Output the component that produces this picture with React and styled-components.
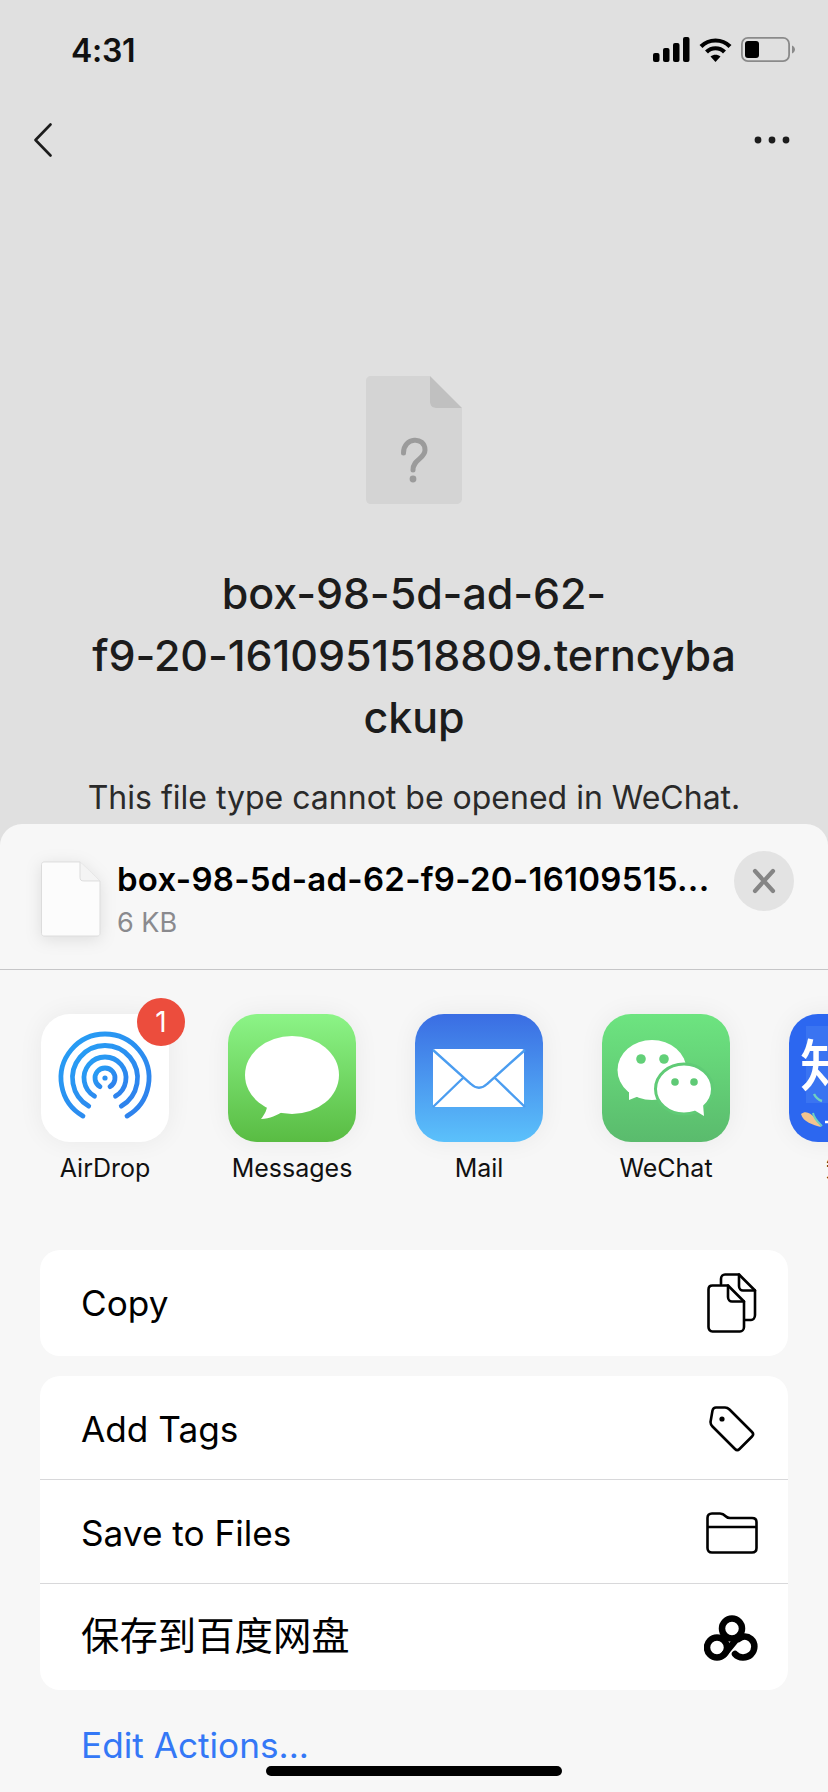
import React from "react";
import styled, { createGlobalStyle } from "styled-components";

const GlobalStyle = createGlobalStyle`
  html, body {
    margin: 0;
    padding: 0;
    background: #e0e0e0;
  }
  * {
    box-sizing: border-box;
  }
`;

const Page = styled.div`
  width: 828px;
  height: 1792px;
  position: relative;
  overflow: hidden;
  display: flex;
  flex-direction: column;
  background: #e0e0e0;
  color: #000;
  font-family: Inter, "Noto Sans CJK SC", sans-serif;
`;

const Preview = styled.div`
  height: 824px;
  flex: none;
  overflow: hidden;
  display: flex;
  flex-direction: column;
`;

const StatusBar = styled.div`
  height: 110px;
  padding: 32px 33px 0 71px;
  display: flex;
  justify-content: space-between;
  align-items: flex-start;
`;

const Clock = styled.div`
  font-size: 32px;
  line-height: 38px;
  font-weight: 600;
  letter-spacing: -0.3px;
  color: #111;
`;

const StatusIcons = styled.div`
  display: flex;
  gap: 9px;
  padding-top: 5px;
  align-items: flex-start;
`;

const NavBar = styled.div`
  height: 60px;
  padding: 0 38px 0 34px;
  display: flex;
  justify-content: space-between;
  align-items: center;
`;

const FileBlock = styled.div`
  padding-top: 206px;
  display: flex;
  flex-direction: column;
  align-items: center;
`;

const FileName = styled.div`
  margin-top: 58px;
  text-align: center;
  font-size: 43px;
  line-height: 62px;
  font-weight: 500;
  color: #1c1c1c;
  letter-spacing: -0.1px;
`;

const FileNameLine = styled.div`
  white-space: nowrap;
`;

const FileHint = styled.div`
  margin-top: 30px;
  font-size: 32px;
  line-height: 40px;
  color: #2a2a2a;
`;

const Sheet = styled.div`
  flex: 1;
  background: #f7f7f7;
  border-radius: 22px 22px 0 0;
  display: flex;
  flex-direction: column;
  overflow: hidden;
`;

const SheetHeader = styled.div`
  height: 146px;
  flex: none;
  padding: 0 34px 0 41px;
  display: flex;
  align-items: center;
  gap: 16px;
  border-bottom: 1px solid #c6c6c8;
`;

const HeaderText = styled.div`
  flex: 1;
  min-width: 0;
  display: flex;
  flex-direction: column;
  gap: 9px;
  margin-top: 6px;
`;

const HeaderTitle = styled.div`
  font-size: 33px;
  line-height: 38px;
  font-weight: 600;
  white-space: nowrap;
  letter-spacing: 0.26px;
`;

const HeaderSize = styled.div`
  font-size: 27px;
  line-height: 32px;
  color: #8a8a8e;
`;

const CloseButton = styled.div`
  width: 60px;
  height: 60px;
  flex: none;
  align-self: flex-start;
  margin-top: 27px;
  margin-left: 8px;
  border-radius: 50%;
  background: #e3e3e3;
  display: flex;
  align-items: center;
  justify-content: center;
`;

const AppRow = styled.div`
  height: 280px;
  flex: none;
  padding: 44px 0 0 41px;
  display: flex;
  gap: 59px;
  overflow: hidden;
`;

const AppItem = styled.div`
  width: 128px;
  flex: none;
  display: flex;
  flex-direction: column;
  align-items: center;
  gap: 10px;
  position: relative;
`;

const AppTile = styled.div`
  width: 128px;
  height: 128px;
  border-radius: 29px;
  overflow: hidden;
  background: ${({ $bg }) => $bg};
  box-shadow: 0 0 26px rgba(0, 0, 0, 0.06);
  display: flex;
  align-items: center;
  justify-content: center;
  position: relative;
`;

const AppLabel = styled.div`
  font-size: ${({ $cjk }) => ($cjk ? 27 : 25)}px;
  line-height: 32px;
  white-space: nowrap;
  color: #111;
`;

const Badge = styled.div`
  position: absolute;
  top: -16px;
  right: -16px;
  width: 48px;
  height: 48px;
  border-radius: 50%;
  background: #ec4d3d;
  color: #fff;
  font-size: 28px;
  line-height: 48px;
  text-align: center;
`;

const ZhihuPatch = styled.span`
  position: absolute;
  left: 17px;
  top: 12px;
  width: 90px;
  height: 77px;
  background: #3a74f1;
`;

const ZhihuGlyph = styled.span`
  position: absolute;
  left: 11px;
  top: 22px;
  color: #fff;
  font-size: 56px;
  line-height: 60px;
  font-weight: 500;
`;

const ActionCards = styled.div`
  padding: 0 40px;
  display: flex;
  flex-direction: column;
  gap: 20px;
`;

const Card = styled.div`
  background: #fff;
  border-radius: 20px;
  overflow: hidden;
`;

const ActionRow = styled.div`
  height: ${({ $h }) => $h || 104}px;
  padding: 0 26px 0 41px;
  display: flex;
  align-items: center;
  justify-content: space-between;
  font-size: ${({ $cjk }) => ($cjk ? 38.4 : 35.2)}px;
  color: #000;
  ${Card} + ${Card} & {
    padding-top: 2px;
  }
  & + & {
    border-top: 1px solid #d8d8da;
  }
`;

const RowLabel = styled.span`
  margin-bottom: ${({ $cjk }) => ($cjk ? 10 : 0)}px;
`;

const RowIcon = styled.span`
  width: 60px;
  display: flex;
  justify-content: center;
`;

const EditActions = styled.div`
  margin-top: 34px;
  padding-left: 81px;
  font-size: 35.2px;
  line-height: 42px;
  color: #3478f6;
`;

const HomeBar = styled.div`
  position: absolute;
  left: 266px;
  bottom: 16px;
  width: 296px;
  height: 10px;
  border-radius: 5px;
  background: #000;
`;

const Signal = () => (
  <svg width="37" height="25" viewBox="0 0 37 25">
    <rect x="0" y="16" width="6.5" height="9" rx="2" />
    <rect x="10" y="11" width="6.5" height="14" rx="2" />
    <rect x="20" y="6" width="6.5" height="19" rx="2" />
    <rect x="30" y="0" width="6.5" height="25" rx="2" />
  </svg>
);

const Wifi = () => (
  <svg width="33" height="25" viewBox="0 0 33 25" fill="none" stroke="#000" strokeWidth="4.2">
    <path d="M2 9.5C10 1.5 23 1.5 31 9.5" />
    <path d="M7.5 15C12.5 10 20.5 10 25.5 15" />
    <path d="M16.5 25L11.5 19.5C14.5 17 18.5 17 21.5 19.5Z" fill="#000" stroke="none" />
  </svg>
);

const Battery = () => (
  <svg width="54" height="25" viewBox="0 0 54 25">
    <rect x="0.9" y="0.9" width="47.2" height="23.2" rx="6" fill="none" stroke="#8a8a8a" strokeWidth="1.8" />
    <rect x="4" y="4" width="14" height="17" rx="3" fill="#000" />
    <path d="M51 8.5C53 9.5 54 11 54 12.5C54 14 53 15.5 51 16.5Z" fill="#8a8a8a" />
  </svg>
);

const Back = () => (
  <svg width="18" height="34" viewBox="0 0 18 34" fill="none" stroke="#1c1c1c" strokeWidth="2.6" strokeLinecap="round" strokeLinejoin="round">
    <path d="M16.5 1.5L1.5 17L16.5 32.5" />
  </svg>
);

const More = () => (
  <svg width="36" height="8" viewBox="0 0 36 8" fill="#1c1c1c">
    <circle cx="4" cy="4" r="3.4" />
    <circle cx="18" cy="4" r="3.4" />
    <circle cx="32" cy="4" r="3.4" />
  </svg>
);

const UnknownFile = () => (
  <svg width="96" height="128" viewBox="0 0 96 128">
    <path d="M5 0H64V26C64 29 66 32 70 32H96V123C96 126 93 128 91 128H5C2 128 0 126 0 123V5C0 2 2 0 5 0Z" fill="#d4d4d4" />
    <path d="M64 0L96 32H70C66 32 64 29 64 26Z" fill="#c0c0c0" />
    <path d="M37.5 77C37.5 61 59 60 59 74C59 83 47 83 47 94" fill="none" stroke="#9b9b9b" strokeWidth="5" strokeLinecap="round" />
    <circle cx="47" cy="103" r="3.4" fill="#9b9b9b" />
  </svg>
);

const SmallFile = () => (
  <svg width="60" height="76" viewBox="0 0 60 80" preserveAspectRatio="none" style={{ flex: "none", marginTop: 4, filter: "drop-shadow(0 3px 8px rgba(0,0,0,0.1))" }}>
    <path d="M3 1H39L59 21V76C59 78 58 79 56 79H3C1.5 79 0.5 78 0.5 76V4C0.5 2 1.5 1 3 1Z" fill="#fcfcfc" stroke="#dcdcdc" strokeWidth="1" />
    <path d="M39 1V17C39 20 40 21 43 21H59" fill="#f4f4f4" stroke="#dcdcdc" strokeWidth="1" />
  </svg>
);

const CloseX = () => (
  <svg width="26" height="26" viewBox="0 0 26 26" stroke="#858585" strokeWidth="4.2" strokeLinecap="round">
    <path d="M4 3L22 23M22 3L4 23" />
  </svg>
);

// arc around the airdrop centre, open towards the bottom
function dropArc(r) {
  const dx = r * 0.5;
  const dy = r * 0.866;
  return `M${52 - dx} ${52 + dy}A${r} ${r} 0 1 1 ${52 + dx} ${52 + dy}`;
}

const AirDropIcon = () => (
  <svg width="104" height="104" viewBox="0 0 104 104" fill="none">
    <defs>
      <linearGradient id="air" x1="0" y1="0" x2="1" y2="1">
        <stop offset="0" stopColor="#26a0f5" />
        <stop offset="1" stopColor="#2f7fec" />
      </linearGradient>
    </defs>
    {[44, 32.5, 21, 10].map((r) => (
      <path key={r} d={dropArc(r)} stroke="url(#air)" strokeWidth="4.8" strokeLinecap="round" />
    ))}
    <circle cx="52" cy="52" r="2.6" fill="#2a90f0" />
  </svg>
);

const MessagesIcon = () => (
  <svg width="128" height="128" viewBox="0 0 128 128">
    <ellipse cx="64" cy="61" rx="47" ry="39" fill="#fff" />
    <path d="M40 88C39 96 37 100 33 105C42 105 49 101 56 97Z" fill="#fff" />
  </svg>
);

const MailIcon = () => (
  <svg width="128" height="128" viewBox="0 0 128 128">
    <rect x="18" y="35" width="91" height="58" rx="2" fill="#fff" />
    <path d="M18 36L56 70C61 75 67 75 72 70L110 36M18 93L48 64M110 93L80 64" fill="none" stroke="#4b9df0" strokeWidth="2.4" />
  </svg>
);

const WeChatIcon = () => (
  <svg width="128" height="128" viewBox="0 0 128 128">
    <ellipse cx="50" cy="56" rx="34.5" ry="30" fill="#fff" />
    <path d="M27 76L27 86L42 80Z" fill="#fff" />
    <circle cx="39" cy="45" r="4.8" fill="#62d078" />
    <circle cx="62" cy="45" r="4.8" fill="#62d078" />
    <ellipse cx="82" cy="75" rx="28.5" ry="25" fill="#fff" stroke="#60cb76" strokeWidth="3" />
    <path d="M92 96L102 102L101 90Z" fill="#fff" />
    <circle cx="73" cy="68" r="3.8" fill="#5fc975" />
    <circle cx="92" cy="68" r="3.8" fill="#5fc975" />
  </svg>
);

const ZhihuFlourish = () => (
  <svg width="128" height="128" viewBox="0 0 128 128" style={{ position: "absolute", left: 0, top: 0 }}>
    <path d="M25 80C27 84 30 86 33 87" stroke="#6fd0c0" strokeWidth="2.4" fill="none" />
    <path d="M12 100C20 94 28 106 32 113C24 111 14 108 12 100Z" fill="#f3c48f" />
    <path d="M24 99C25 105 30 109 33 112" stroke="#6fd0c0" strokeWidth="2" fill="none" />
    <path d="M36 108H128" stroke="#fff" strokeWidth="2.4" />
  </svg>
);

const CopyIcon = () => (
  <svg width="50" height="60" viewBox="0 0 50 60" fill="none" stroke="#000" strokeWidth="2.6" strokeLinejoin="round" strokeLinecap="round">
    <path d="M14 11V6C14 3 16 1.5 18 1.5H32L48 17.5V42C48 45 46 47 44 47H37" />
    <path d="M32 1.5V13C32 16 34 17.5 36 17.5H48" />
    <path d="M5.500 12.500H21L37 28.500V54C37 56.500 35 58.500 33 58.500H5.500C3 58.500 1.500 56.500 1.500 54V16.500C1.500 14 3 12.500 5.500 12.500Z" fill="#fff" />
    <path d="M21 12.500V24C21 27 23 28.500 25 28.500H37" />
  </svg>
);

const TagIcon = () => (
  <svg width="46" height="46" viewBox="0 0 46 46" fill="none" stroke="#000" strokeWidth="2.6" strokeLinejoin="round">
    <path d="M3.500 4.500C4 2.500 5 1.500 7 1.500H16C18 1.500 19 2 20.500 3.500L43 26C44.500 27.500 44.500 29 43 30.500L30.500 43C29 44.500 27.500 44.500 26 43L3.500 20.500C2 19 1.500 18 1.500 16Z" />
    <circle cx="13" cy="13" r="2.600" fill="#000" stroke="none" />
  </svg>
);

const FolderIcon = () => (
  <svg width="52" height="42" viewBox="0 0 52 42" fill="none" stroke="#000" strokeWidth="2.6" strokeLinejoin="round">
    <path d="M1.500 6C1.500 3 3 1.500 6 1.500H14C17 1.500 18 2.500 20 4.500C21 5.500 22 6 24 6H46C49 6 50.500 7.500 50.500 10V36C50.500 39 49 40.500 46 40.500H6C3 40.500 1.500 39 1.500 36Z" />
    <path d="M1.500 15H50.500" />
  </svg>
);

const BaiduIcon = () => (
  <svg width="56" height="46" viewBox="0 0 56 46" fill="none" stroke="#000" strokeWidth="6.500" strokeLinecap="round">
    <circle cx="28" cy="13.500" r="10" />
    <circle cx="13" cy="32.500" r="10" />
    <path d="M20 39.500L36 20" />
    <path d="M31 39C35 43.500 42.500 43.500 47 39.500C51.500 35 51.500 28 47 24C43 20.500 38 21 34.500 24" />
  </svg>
);

const apps = [
  { name: "AirDrop", bg: "#fff", icon: <AirDropIcon />, badge: 1 },
  { name: "Messages", bg: "linear-gradient(#8cf487, #59bc43)", icon: <MessagesIcon /> },
  { name: "Mail", bg: "linear-gradient(#3a6de3, #5bc1fb)", icon: <MailIcon /> },
  { name: "WeChat", bg: "linear-gradient(#6de480, #5abb6d)", icon: <WeChatIcon /> },
  {
    name: "知乎",
    cjk: true,
    bg: "#2c67f0",
    icon: (
      <>
        <ZhihuPatch />
        <ZhihuGlyph>知</ZhihuGlyph>
        <ZhihuFlourish />
      </>
    ),
  },
];

const nameLines = ["box-98-5d-ad-62-", "f9-20-1610951518809.terncyba", "ckup"];

const App = () => (
  <Page>
    <GlobalStyle />
    <Preview>
      <StatusBar>
        <Clock>4:31</Clock>
        <StatusIcons>
          <Signal />
          <Wifi />
          <Battery />
        </StatusIcons>
      </StatusBar>
      <NavBar>
        <Back />
        <More />
      </NavBar>
      <FileBlock>
        <UnknownFile />
        <FileName>
          {nameLines.map((line) => (
            <FileNameLine key={line}>{line}</FileNameLine>
          ))}
        </FileName>
        <FileHint>This file type cannot be opened in WeChat.</FileHint>
      </FileBlock>
    </Preview>
    <Sheet>
      <SheetHeader>
        <SmallFile />
        <HeaderText>
          <HeaderTitle>box-98-5d-ad-62-f9-20-16109515...</HeaderTitle>
          <HeaderSize>6 KB</HeaderSize>
        </HeaderText>
        <CloseButton>
          <CloseX />
        </CloseButton>
      </SheetHeader>
      <AppRow>
        {apps.map((app) => (
          <AppItem key={app.name}>
            <AppTile $bg={app.bg}>{app.icon}</AppTile>
            {app.badge && <Badge>{app.badge}</Badge>}
            <AppLabel $cjk={app.cjk}>{app.name}</AppLabel>
          </AppItem>
        ))}
      </AppRow>
      <ActionCards>
        <Card>
          <ActionRow $h={106}>
            <RowLabel>Copy</RowLabel>
            <RowIcon>
              <CopyIcon />
            </RowIcon>
          </ActionRow>
        </Card>
        <Card>
          <ActionRow $h={103}>
            <RowLabel>Add Tags</RowLabel>
            <RowIcon>
              <TagIcon />
            </RowIcon>
          </ActionRow>
          <ActionRow $h={104}>
            <RowLabel>Save to Files</RowLabel>
            <RowIcon>
              <FolderIcon />
            </RowIcon>
          </ActionRow>
          <ActionRow $h={107} $cjk>
            <RowLabel $cjk>保存到百度网盘</RowLabel>
            <RowIcon>
              <BaiduIcon />
            </RowIcon>
          </ActionRow>
        </Card>
      </ActionCards>
      <EditActions>Edit Actions...</EditActions>
    </Sheet>
    <HomeBar />
  </Page>
);

export default App;
